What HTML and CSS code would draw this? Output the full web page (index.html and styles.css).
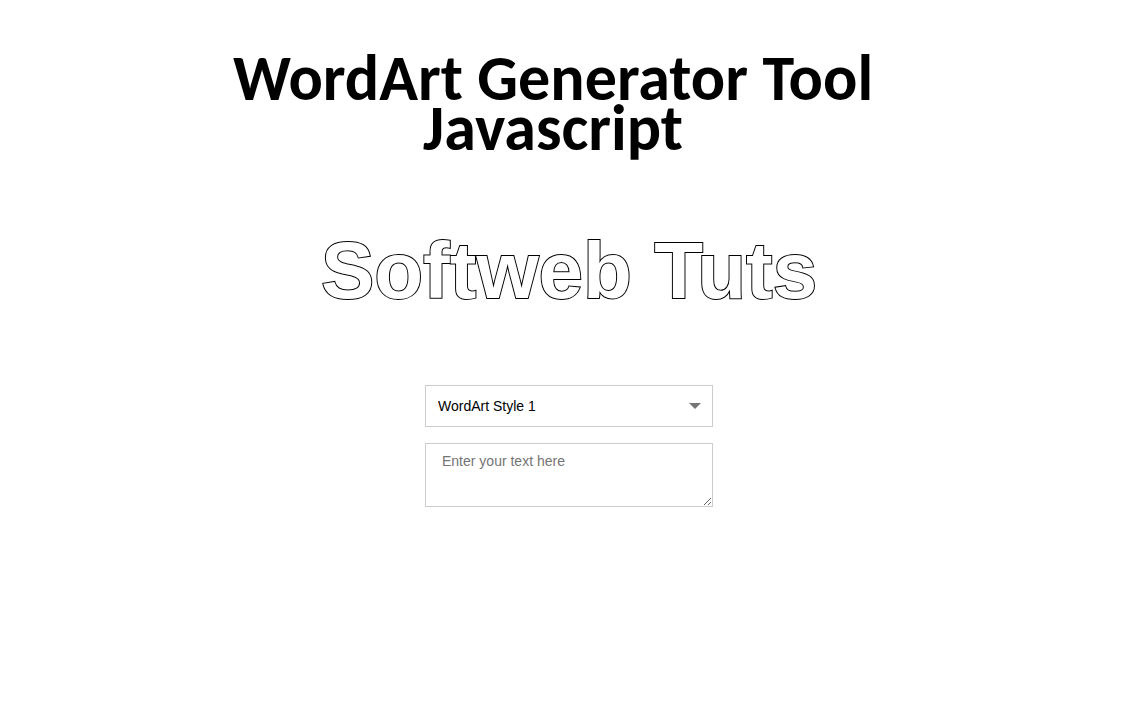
FILE: index.html
```
<!DOCTYPE html>
<html lang="en">
<head>
  <meta charset="UTF-8">
  <meta name="viewport" content="width=device-width, initial-scale=1.0">
  <title>WordArt Generator Tool Javascript</title>
  <link rel="stylesheet" href="styles.css">
</head>
<body>
  <h1 class="page-title">WordArt Generator Tool<br>Javascript</h1>

  <div class="wordart" id="wordart">Softweb Tuts</div>

  <form class="controls">
    <div class="select-wrap">
      <select id="styleSelect" aria-label="WordArt style">
        <option>WordArt Style 1</option>
        <option>WordArt Style 2</option>
        <option>WordArt Style 3</option>
      </select>
      <svg class="arrow" viewBox="0 0 12 6" aria-hidden="true"><path d="M0 0h12L6 6z"/></svg>
    </div>
    <textarea id="textInput" aria-label="Your text" placeholder="Enter your text here"></textarea>
  </form>

  <script>
    const wordart = document.getElementById('wordart');
    document.getElementById('textInput').addEventListener('input', function () {
      wordart.textContent = this.value || 'Softweb Tuts';
    });
  </script>
</body>
</html>
```
FILE: styles.css
```
* { box-sizing: border-box; }
body { margin: 0; padding: 53px 2px 0 0; background: #fff; font-family: "Liberation Sans", Arial, sans-serif; }

.page-title { margin: 0; padding-right: 32px; font-family: Calibri, Carlito, Lato, sans-serif; font-size: 64px; font-weight: bold; line-height: 50px; text-align: center; color: #000; }

.wordart { margin-top: 68px; font-family: "Liberation Sans", Arial, sans-serif; font-size: 80px; font-weight: bold; line-height: 100px; text-align: center; color: #fff; -webkit-text-stroke: 2px #000; paint-order: stroke fill; }

.controls { display: flex; flex-direction: column; gap: 16px; width: 288px; max-width: 100%; margin: 64px auto 0; }
.select-wrap { display: grid; align-items: center; }
.select-wrap select, .arrow { grid-area: 1 / 1; }
.select-wrap select { appearance: none; width: 100%; height: 42px; padding: 0 32px 0 12px; border: 1px solid #ccc; border-radius: 0; background: #fff; font: 14px "Liberation Sans", Arial, sans-serif; color: #000; }
.arrow { justify-self: end; width: 12px; height: 6px; margin-right: 12px; fill: #757575; pointer-events: none; }
textarea { display: block; width: 100%; height: 64px; padding: 9px 16px; border: 1px solid #ccc; border-radius: 0; resize: both; font: 14px "Liberation Sans", Arial, sans-serif; }
textarea::placeholder { color: #757575; }
```
